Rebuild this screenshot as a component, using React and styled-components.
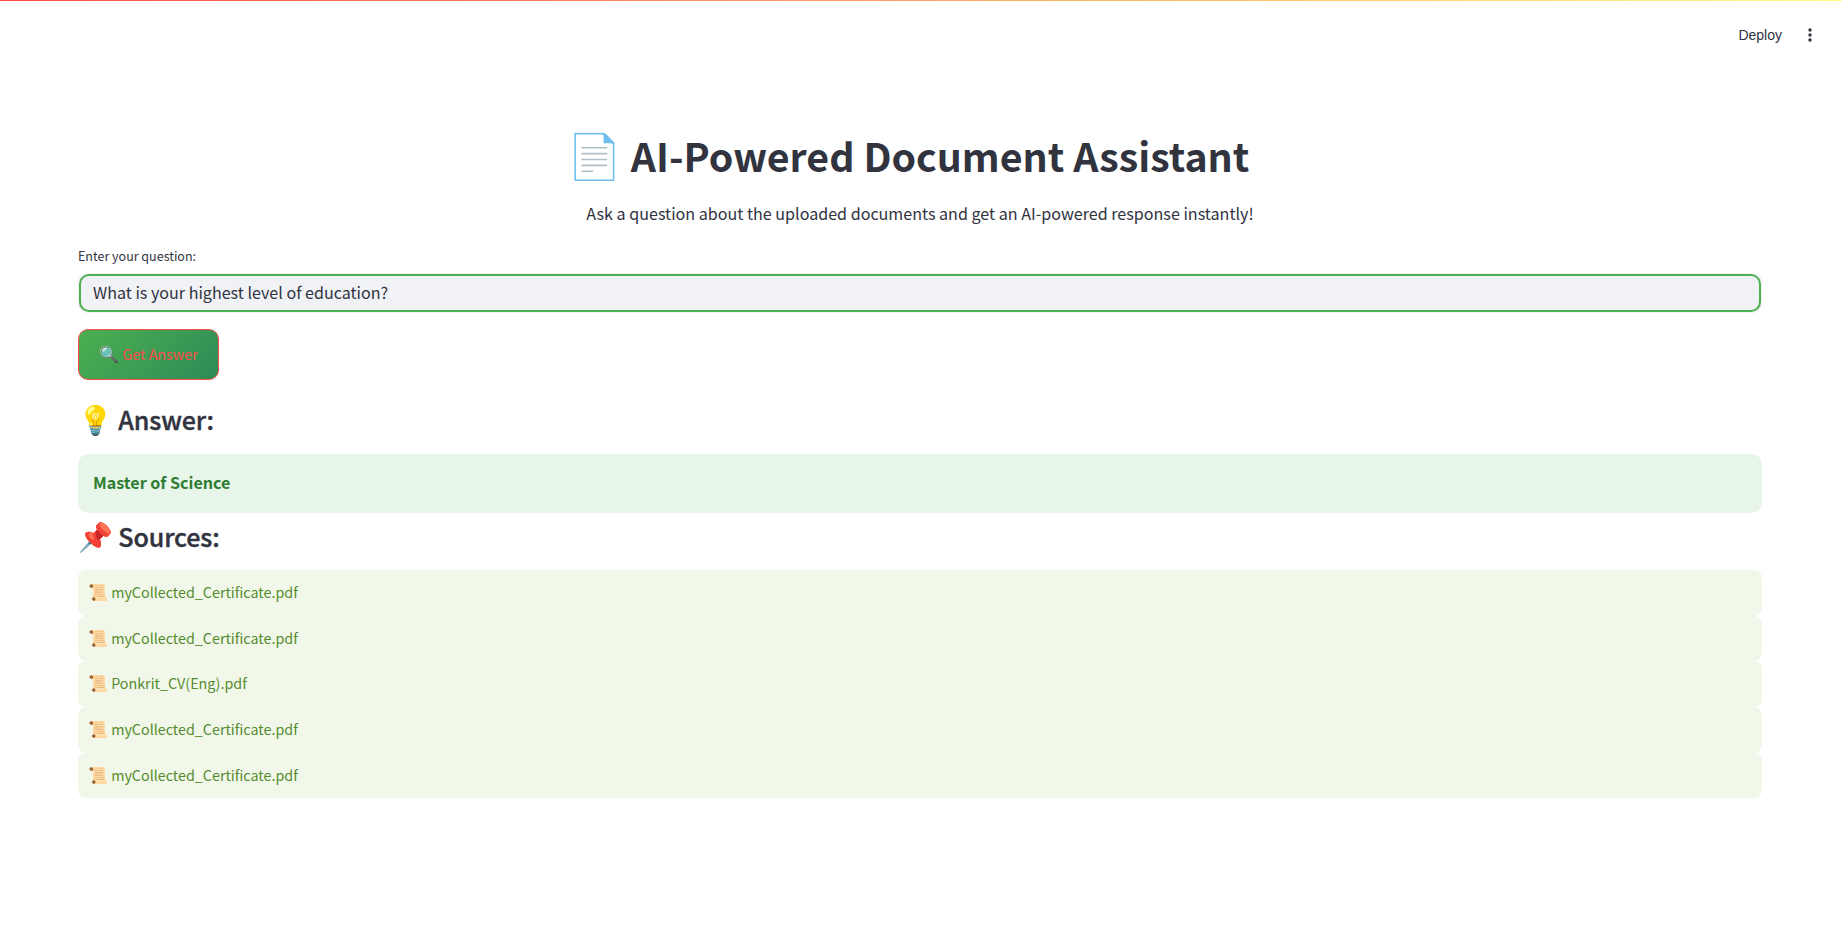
import React from 'react';
import styled, { createGlobalStyle } from 'styled-components';

const GlobalStyle = createGlobalStyle`
  *, *::before, *::after { box-sizing: border-box; }
  body {
    margin: 0;
    background: #fff;
    color: #31333f;
    font-family: "Source Sans Pro", "Noto Sans CJK SC", "Noto Color Emoji", sans-serif;
  }
`;

const Page = styled.div`
  display: flex;
  flex-direction: column;
  height: 926px;
  overflow: hidden;
`;

const Decoration = styled.div`
  height: 1px;
  flex: none;
  background: linear-gradient(90deg, #ff4b4b, #fffd80);
`;

const Header = styled.header`
  display: flex;
  align-items: center;
  justify-content: flex-end;
  gap: 20px;
  height: 68px;
  padding-right: 24px;
  flex: none;
`;

const DeployButton = styled.button`
  border: 0;
  padding: 0;
  background: none;
  color: #31333f;
  font: 14px/20px "Liberation Sans", sans-serif;
`;

const MenuIcon = styled.svg`
  width: 16px;
  height: 16px;
  fill: #31333f;
`;

const Main = styled.main`
  display: flex;
  flex-direction: column;
  align-items: stretch;
  padding: 60px 80px 0 78px;
`;

const Emoji = styled.span`
  font-family: "Noto Color Emoji", sans-serif;
  font-size: ${(p) => p.$size}px;
  font-weight: 400;
  line-height: 0;
`;

const Title = styled.h1`
  margin: 0;
  padding-right: 23.5px;
  height: 54px;
  text-align: center;
  font-size: 39.35px;
  font-weight: 700;
  line-height: 52.5px;
  white-space: nowrap;
`;

const Subtitle = styled.p`
  margin: 16px 0 0;
  text-align: center;
  font-size: 16.1px;
  line-height: 28px;
`;

const Label = styled.label`
  margin-top: 18px;
  font-size: 12.5px;
  line-height: 22px;
`;

const InputShell = styled.div`
  display: flex;
  height: 40px;
  margin-top: 6px;
  padding: 1px;
  border-radius: 9px;
  background: #f0f2f6;
`;

const Input = styled.input`
  width: 100%;
  padding: 0 12px 2px;
  border: 2px solid #4caf50;
  border-radius: 10px;
  outline: 0;
  background: #f0f2f6;
  color: #31333f;
  font-family: inherit;
  font-size: 16.1px;
`;

const AskButton = styled.button`
  align-self: flex-start;
  width: 141px;
  height: 51px;
  margin-top: 16px;
  padding: 0 0 2px;
  border: 1px solid #ff4b4b;
  border-radius: 10px;
  background: linear-gradient(135deg, #4caf50, #2e8b57);
  color: #ff4b4b;
  font-family: inherit;
  font-size: 14.32px;
  line-height: 26px;
  white-space: nowrap;
`;

const Heading = styled.h2`
  margin: ${(p) => p.$top}px 0 0;
  font-size: 25.07px;
  font-weight: 500;
  line-height: 34px;
  letter-spacing: -0.1px;
  -webkit-text-stroke: 0.4px #31333f;
`;

const AnswerBox = styled.div`
  height: 59px;
  margin-top: 18px;
  padding: 0 15px;
  border-radius: 10px;
  background: #e8f5e9;
  color: #2e7d32;
  font-size: 16.1px;
  font-weight: 700;
  line-height: 56.5px;
`;

const SourceList = styled.div`
  margin-top: 17.2px;
`;

const Source = styled.div`
  height: 45.6px;
  padding: 0 10px;
  border-radius: 8px;
  background: #f1f8e9;
  color: #558b2f;
  font-size: 14.32px;
  line-height: 44.4px;
`;

const sources = [
  'myCollected_Certificate.pdf',
  'myCollected_Certificate.pdf',
  'Ponkrit_CV(Eng).pdf',
  'myCollected_Certificate.pdf',
  'myCollected_Certificate.pdf',
];

export default function App() {
  return (
    <Page>
      <GlobalStyle />
      <Decoration />
      <Header>
        <DeployButton>Deploy</DeployButton>
        <MenuIcon viewBox="0 0 16 16">
          <circle cx="8" cy="3" r="1.7" />
          <circle cx="8" cy="8" r="1.7" />
          <circle cx="8" cy="13" r="1.7" />
        </MenuIcon>
      </Header>
      <Main>
        <Title><Emoji $size={44}>📄</Emoji> AI-Powered Document Assistant</Title>
        <Subtitle>Ask a question about the uploaded documents and get an AI-powered response instantly!</Subtitle>
        <Label htmlFor="question">Enter your question:</Label>
        <InputShell>
          <Input id="question" defaultValue="What is your highest level of education?" />
        </InputShell>
        <AskButton><Emoji $size={16}>🔍</Emoji> Get Answer</AskButton>
        <Heading $top={22}><Emoji $size={28}>💡</Emoji> Answer:</Heading>
        <AnswerBox>Master of Science</AnswerBox>
        <Heading $top={6}><Emoji $size={28}>📌</Emoji> Sources:</Heading>
        <SourceList>
          {sources.map((name, i) => (
            <Source key={i}><Emoji $size={16}>📜</Emoji> {name}</Source>
          ))}
        </SourceList>
      </Main>
    </Page>
  );
}
